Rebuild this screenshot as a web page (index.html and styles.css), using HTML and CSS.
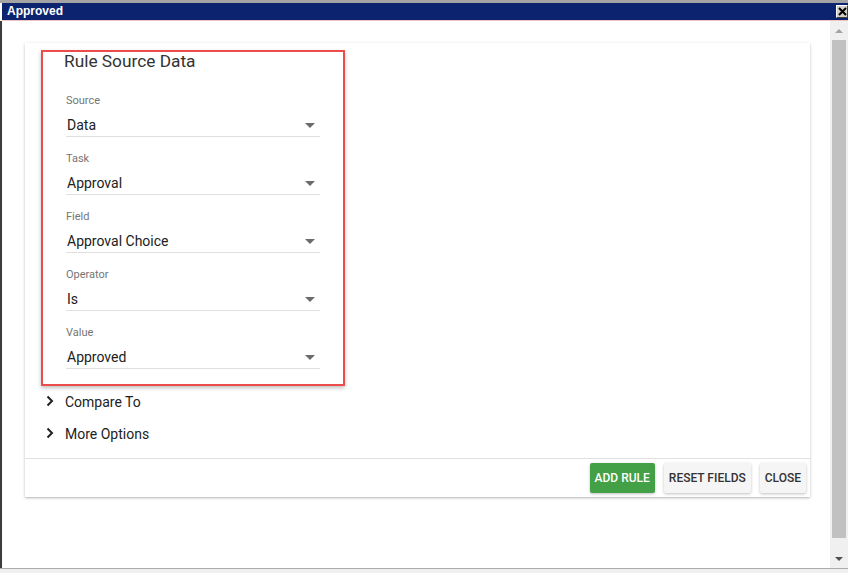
FILE: index.html
```html
<!DOCTYPE html>
<html>
<head>
<meta charset="utf-8">
<link rel="stylesheet" href="styles.css">
</head>
<body>
<div class="window">
  <div class="titlebar">
    <span class="title">Approved</span>
    <span class="close-btn"><svg width="9" height="9" viewBox="0 0 9 9"><path d="M1 1L8 8M8 1L1 8" stroke="#000" stroke-width="2"/></svg></span>
  </div>
  <div class="client">
    <div class="content">
      <div class="card">
        <div class="card-body">
          <div class="highlight">
            <h2 class="section-title">Rule Source Data</h2>
            <div class="field">
              <div class="field-label">Source</div>
              <div class="field-value"><span>Data</span><span class="caret"></span></div>
            </div>
            <div class="field">
              <div class="field-label">Task</div>
              <div class="field-value"><span>Approval</span><span class="caret"></span></div>
            </div>
            <div class="field">
              <div class="field-label">Field</div>
              <div class="field-value"><span>Approval Choice</span><span class="caret"></span></div>
            </div>
            <div class="field">
              <div class="field-label">Operator</div>
              <div class="field-value"><span>Is</span><span class="caret"></span></div>
            </div>
            <div class="field">
              <div class="field-label">Value</div>
              <div class="field-value"><span>Approved</span><span class="caret"></span></div>
            </div>
          </div>
          <div class="expander">
            <svg class="chevron" width="8" height="12" viewBox="0 0 8 12"><path d="M1.5 1.5L6 6L1.5 10.5" fill="none" stroke="#222" stroke-width="2"/></svg>
            <span>Compare To</span>
          </div>
          <div class="expander">
            <svg class="chevron" width="8" height="12" viewBox="0 0 8 12"><path d="M1.5 1.5L6 6L1.5 10.5" fill="none" stroke="#222" stroke-width="2"/></svg>
            <span>More Options</span>
          </div>
        </div>
        <div class="card-actions">
          <button class="btn btn-primary">ADD RULE</button>
          <button class="btn">RESET FIELDS</button>
          <button class="btn">CLOSE</button>
        </div>
      </div>
    </div>
    <div class="scrollbar">
      <div class="sb-arrow"><span class="tri-up"></span></div>
      <div class="sb-track"><div class="sb-thumb"></div></div>
      <div class="sb-arrow"><span class="tri-down"></span></div>
    </div>
  </div>
  <div class="bottom-edge"></div>
</div>
</body>
</html>
```

FILE: styles.css
```css
html, body {
  margin: 0;
  padding: 0;
  width: 848px;
  height: 573px;
  overflow: hidden;
  background: #ffffff;
}

.window {
  width: 848px;
  height: 573px;
  display: flex;
  flex-direction: column;
  border-top: 3px solid #a4a4a4;
  box-sizing: border-box;
}

.titlebar {
  height: 17px;
  flex: none;
  background: #0c2470;
  margin-left: 2px;
  display: flex;
  align-items: center;
  justify-content: space-between;
  border-bottom: 1px solid #f1c4c4;
}

.title {
  color: #ffffff;
  font-family: "Liberation Sans", Arial, sans-serif;
  font-weight: bold;
  font-size: 12px;
  padding-left: 5px;
  line-height: 17px;
}

.close-btn {
  width: 12px;
  height: 13px;
  background: #d4d0c8;
  border-top: 1px solid #fff;
  border-left: 1px solid #fff;
  border-right: 1px solid #404040;
  border-bottom: 1px solid #404040;
  box-sizing: border-box;
  display: flex;
  align-items: center;
  justify-content: center;
}

.client {
  flex: 1;
  display: flex;
  border-left: 2px solid #3c3c3c;
  min-height: 0;
}

.content {
  flex: 1;
  background: #ffffff;
  padding: 22px 20px 0 22px;
  border-left: 1px solid #fafafa;
}

.card {
  background: #fff;
  box-shadow: 0 1px 3px rgba(0, 0, 0, 0.22), 0 1px 1px rgba(0, 0, 0, 0.08);
  font-family: Roboto, "Liberation Sans", sans-serif;
}

.card-body {
  padding: 7px 0 8px 16px;
}

.highlight {
  width: 304px;
  box-sizing: border-box;
  border: 2px solid #ec4c4c;
  box-shadow: 0 2px 4px rgba(0, 0, 0, 0.25);
  padding: 0 23px 15px 22px;
}

.section-title {
  margin: 0;
  font-size: 17.3px;
  font-weight: 400;
  color: #333;
  line-height: 18px;
  padding-bottom: 24px;
  margin-left: -1px;
}

.field {
  padding-left: 1px;
  margin-bottom: 15px;
}

.field:last-child {
  margin-bottom: 0;
}

.field-label {
  font-size: 11px;
  color: #757575;
  line-height: 14px;
  height: 14px;
}

.field-value {
  margin-top: 7px;
  height: 20px;
  line-height: 20px;
  font-size: 14px;
  color: #212121;
  display: flex;
  align-items: center;
  justify-content: space-between;
  border-bottom: 1px solid #e0e0e0;
  padding-bottom: 1px;
  padding-left: 1px;
}

.caret {
  width: 0;
  height: 0;
  border-left: 5px solid transparent;
  border-right: 5px solid transparent;
  border-top: 5px solid #6b6b6b;
  margin-right: 5px;
}

.expander {
  height: 32px;
  display: flex;
  align-items: center;
  padding-left: 5px;
  font-size: 14px;
  color: #222;
}

.chevron {
  margin-right: 11px;
  margin-top: -3px;
}

.card-actions {
  border-top: 1px solid #e0e0e0;
  display: flex;
  justify-content: flex-end;
  gap: 9px;
  padding: 4px 4px 4px 0;
}

.btn {
  height: 30px;
  padding: 0 5px;
  border: none;
  border-radius: 2px;
  background: #f5f5f5;
  color: #333;
  font-family: Roboto, "Liberation Sans", sans-serif;
  font-size: 12px;
  font-weight: 500;
  letter-spacing: 0;
  box-shadow: 0 1px 3px rgba(0, 0, 0, 0.25);
}

.btn-primary {
  background: #43a047;
  color: #fff;
}

.scrollbar {
  width: 18px;
  flex: none;
  background: #f0f0f0;
  display: flex;
  flex-direction: column;
}

.sb-arrow {
  height: 19px;
  display: flex;
  align-items: center;
  justify-content: center;
  flex: none;
}

.tri-up {
  width: 0;
  height: 0;
  border-left: 4px solid transparent;
  border-right: 4px solid transparent;
  border-bottom: 4px solid #a3a3a3;
}

.tri-down {
  width: 0;
  height: 0;
  border-left: 4px solid transparent;
  border-right: 4px solid transparent;
  border-top: 4px solid #505050;
}

.sb-track {
  flex: 1;
  padding: 0 2px 11px 2px;
  display: flex;
  flex-direction: column;
}

.sb-thumb {
  flex: 1;
  background: #c1c1c1;
}

.bottom-edge {
  height: 4px;
  flex: none;
  border-top: 1px solid #ababab;
  background: #f0f0f0;
}
```
